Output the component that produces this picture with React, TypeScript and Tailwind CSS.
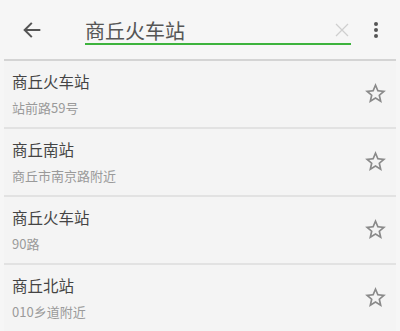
const items = [
  { title: "商丘火车站", sub: "站前路59号" },
  { title: "商丘南站", sub: "商丘市南京路附近" },
  { title: "商丘火车站", sub: "90路" },
  { title: "商丘北站", sub: "010乡道附近" },
];

function StarOutline() {
  return (
    <svg width="25" height="25" viewBox="0 0 24 24" fill="#8a8a8a">
      <path d="M22 9.24l-7.19-.62L12 2 9.19 8.63 2 9.24l5.46 4.73L5.82 21 12 17.27 18.18 21l-1.63-7.03L22 9.24zM12 15.4l-3.76 2.27 1-4.28-3.32-2.88 4.38-.38L12 6.1l1.71 4.04 4.38.38-3.32 2.88 1 4.28L12 15.4z" />
    </svg>
  );
}

export default function App() {
  return (
    <div
      className="w-[400px] h-[331px] overflow-hidden bg-[#f6f6f6]"
      style={{ fontFamily: '"Noto Sans CJK SC", "Noto Sans", sans-serif' }}
    >
      <header className="h-[59px] flex items-center bg-[#f6f6f6]">
        <button className="w-[62px] h-full flex items-center justify-center pl-[1px]">
          <svg width="22" height="22" viewBox="0 0 24 24" fill="none" stroke="#555" strokeWidth="2.2" strokeLinecap="square">
            <path d="M20 12H4.5M11 5l-7 7 7 7" />
          </svg>
        </button>
        <div className="ml-[23px] w-[266px] h-full flex items-center relative">
          <span className="text-[20px] text-[#555] leading-none mt-[3px]">商丘火车站</span>
          <svg className="absolute right-[2px] top-[23px]" width="14" height="14" viewBox="0 0 14 14" stroke="#cfcfcf" strokeWidth="1.3">
            <path d="M1 1l12 12M13 1L1 13" />
          </svg>
          <div className="absolute left-0 right-0 top-[43px] h-[2px] bg-[#3db33d]" />
        </div>
        <div className="flex-1 flex flex-col items-center gap-[2px] mt-[1px]">
          <span className="w-[4px] h-[4px] rounded-full bg-[#555]" />
          <span className="w-[4px] h-[4px] rounded-full bg-[#555]" />
          <span className="w-[4px] h-[4px] rounded-full bg-[#555]" />
        </div>
      </header>
      <div className="mx-[4px] h-[2px] bg-[#d4d4d4]" />
      <ul className="mx-[4px]">
        {items.map((it, i) => (
          <li key={i} className="h-[68px] flex items-center border-b-2 border-[#e2e2e2] bg-[#f4f4f4]">
            <div className="flex-1 pl-[8px]">
              <p className="text-[15.5px] text-[#444] leading-none">{it.title}</p>
              <p className="text-[13px] text-[#9a9a9a] leading-none mt-[12px]">{it.sub}</p>
            </div>
            <div className="w-[25px] mr-[8px] mt-[-1px]">
              <StarOutline />
            </div>
          </li>
        ))}
      </ul>
    </div>
  );
}
